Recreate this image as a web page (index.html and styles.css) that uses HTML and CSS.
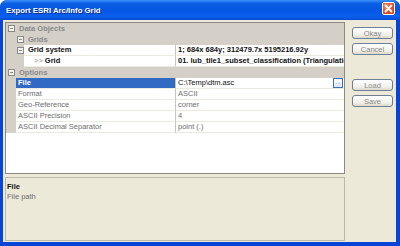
FILE: index.html
```html
<!DOCTYPE html>
<html lang="en">
<head>
    <meta charset="UTF-8">
    <title>Export ESRI Arc/Info Grid</title>
    <link rel="stylesheet" href="styles.css">
</head>
<body>
    <div class="window">
        <!-- Barra de titulo -->
        <div class="titlebar">
            <span class="title">Export ESRI Arc/Info Grid</span>
            <span class="close">
                <svg width="13" height="13" viewBox="0 0 13 13">
                    <path d="M3.5 3.5 L9.5 9.5 M9.5 3.5 L3.5 9.5" stroke="#fff" stroke-width="1.8" stroke-linecap="round"/>
                </svg>
            </span>
        </div>

        <div class="client">
            <div class="main">
                <!-- Grade de propriedades -->
                <div class="grid">
                    <div class="row cat">
                        <span class="box lvl0"></span>
                        <span class="cat-label">Data Objects</span>
                    </div>
                    <div class="row cat">
                        <span class="box lvl1"></span>
                        <span class="cat-label">Grids</span>
                    </div>
                    <div class="row">
                        <span class="margin wide"><span class="box lvl1"></span></span>
                        <span class="name wide-name strong">Grid system</span>
                        <span class="value strong">1; 684x 684y; 312479.7x 5195216.92y</span>
                    </div>
                    <div class="row">
                        <span class="margin wide"></span>
                        <span class="name wide-name strong"><span class="arrows">&gt;&gt;</span> Grid</span>
                        <span class="value strong">01. lub_tile1_subset_classification (Triangulation)</span>
                    </div>
                    <div class="row cat">
                        <span class="box lvl0"></span>
                        <span class="cat-label">Options</span>
                    </div>
                    <div class="row">
                        <span class="margin"></span>
                        <span class="name selected strong">File</span>
                        <span class="value dark">C:\Temp\dtm.asc<span class="dots">...</span></span>
                    </div>
                    <div class="row">
                        <span class="margin"></span>
                        <span class="name">Format</span>
                        <span class="value">ASCII</span>
                    </div>
                    <div class="row">
                        <span class="margin"></span>
                        <span class="name">Geo-Reference</span>
                        <span class="value">corner</span>
                    </div>
                    <div class="row">
                        <span class="margin"></span>
                        <span class="name">ASCII Precision</span>
                        <span class="value">4</span>
                    </div>
                    <div class="row">
                        <span class="margin"></span>
                        <span class="name">ASCII Decimal Separator</span>
                        <span class="value">point (.)</span>
                    </div>
                </div>

                <!-- Descricao do item selecionado -->
                <div class="desc">
                    <div class="desc-title">File</div>
                    <div class="desc-text">File path</div>
                </div>
            </div>

            <div class="side">
                <button class="btn">Okay</button>
                <button class="btn">Cancel</button>
                <button class="btn load">Load</button>
                <button class="btn">Save</button>
            </div>
        </div>
    </div>
</body>
</html>
```

FILE: styles.css
```css
/* Janela estilo XP */
body {
    margin: 0;
    width: 400px;
    height: 246px;
    overflow: hidden;
    background: #ffffff;
    font-family: "Liberation Sans", Arial, sans-serif;
    font-size: 7.5px;
}
.window {
    display: flex;
    flex-direction: column;
    height: 246px;
    background: #0845d6;
    border-radius: 7px 7px 0 0;
    overflow: hidden;
}
.titlebar {
    height: 20px;
    flex: none;
    display: flex;
    align-items: center;
    justify-content: space-between;
    padding: 0 5px 0 6px;
    background: linear-gradient(#3d8ff7 0%, #0a5fe2 18%, #0556e4 50%, #0a60ec 85%, #0448d2 100%);
}
.title {
    color: #fff;
    font-weight: bold;
    font-size: 7.8px;
    text-shadow: 1px 1px 0 #0a2a8a;
}
.close {
    width: 13px;
    height: 13px;
    margin-top: -4px;
    border: 1px solid #fff;
    border-radius: 2px;
    box-sizing: border-box;
    background: radial-gradient(circle at 30% 30%, #f08a60, #d8461c 70%);
    display: flex;
}
.close svg {
    margin: -1px;
}
.client {
    flex: 1;
    display: flex;
    background: #ece9d8;
    margin: 0 4px 4px 3px;
}
.main {
    width: 340px;
    margin: 2px 0 1px 2px;
    display: flex;
    flex-direction: column;
    gap: 3px;
}

/* Grade */
.grid {
    height: 152px;
    box-sizing: border-box;
    border: 1px solid #8c8a80;
    background: #fff;
    overflow: hidden;
}
.row {
    display: flex;
    height: 11px;
    line-height: 10px;
    white-space: nowrap;
    color: #6e6e6e;
}
.row.cat {
    background: #d4d0c8;
    align-items: center;
}
.cat-label {
    color: #8a8a8a;
    font-weight: bold;
}
.box {
    width: 7px;
    height: 7px;
    box-sizing: border-box;
    border: 1px solid #8a8a8a;
    background: linear-gradient(#8a8a8a, #8a8a8a) center / 3px 1px no-repeat, #f4f3ee;
    flex: none;
}
.box.lvl0 {
    margin: 0 4px 0 2px;
}
.box.lvl1 {
    margin: 0 4px 0 11px;
}
.margin {
    width: 10px;
    flex: none;
    background: #d4d0c8;
    display: flex;
    align-items: center;
}
.margin.wide {
    width: 18px;
}
.name {
    width: 160px;
    flex: none;
    box-sizing: border-box;
    padding-left: 2px;
    border-right: 1px solid #c8c6bc;
    border-bottom: 1px solid #eceadf;
}
.name.wide-name {
    width: 152px;
    padding-left: 4px;
}
.value {
    flex: 1;
    padding-left: 2px;
    border-bottom: 1px solid #eceadf;
    overflow: hidden;
    position: relative;
}
.strong {
    font-weight: bold;
    color: #111;
}
.dark {
    color: #111;
}
.arrows {
    color: #8a8a8a;
    font-weight: normal;
    margin-left: 6px;
}
.selected {
    background: #316ac5;
    color: #fff;
}
.dots {
    position: absolute;
    right: 1px;
    top: 0;
    width: 10px;
    height: 10px;
    box-sizing: border-box;
    border: 1px solid #3c6fc8;
    background: linear-gradient(#ffffff, #dbe6f7);
    color: #3c6fc8;
    font-size: 6px;
    line-height: 6px;
    text-align: center;
}

/* Painel de descricao */
.desc {
    flex: 1;
    box-sizing: border-box;
    border: 1px solid #bdb9a8;
    padding: 4px 1px;
    line-height: 10px;
}
.desc-title {
    font-weight: bold;
    color: #111;
}
.desc-text {
    color: #6e6e6e;
}

/* Botoes */
.side {
    display: flex;
    flex-direction: column;
    gap: 4px;
    margin: 7px 0 0 7px;
}
.btn {
    width: 41px;
    height: 12px;
    padding: 0;
    font-family: "Liberation Sans", Arial, sans-serif;
    font-size: 7.5px;
    color: #8a8a8a;
    border: 1px solid #6f7f95;
    border-radius: 3px;
    background: linear-gradient(#ffffff, #f0efe8 70%, #dcd9cb);
}
.btn.load {
    margin-top: 20px;
}
```
